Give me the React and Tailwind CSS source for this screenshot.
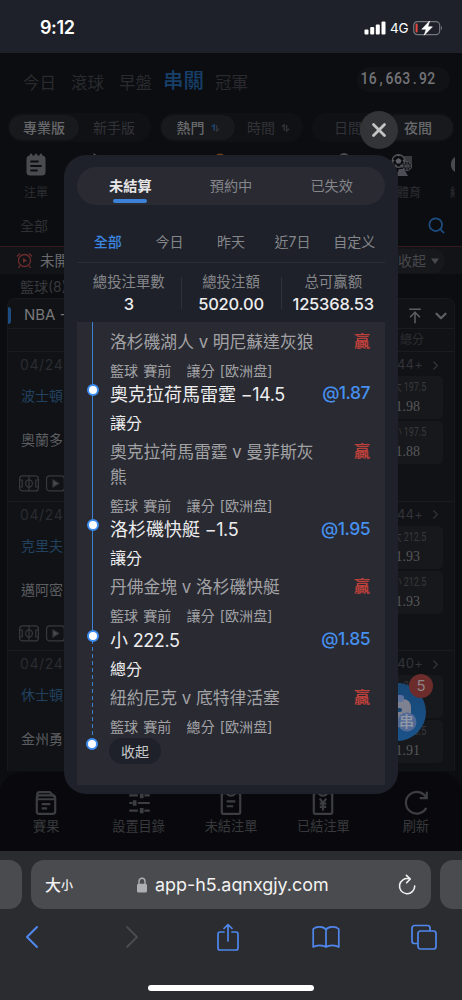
import React from "react";
import clsx from "clsx";
import { X, Search, ChevronRight, ChevronDown, ArrowUpToLine } from "lucide-react";

const sportTabs = ["今日", "滾球", "早盤", "串關", "冠軍"];

const matches = [
  { date: "04/24", home: "波士頓", away: "奧蘭多", more: "44+", line: "197.5", over: "1.98", under: "1.88" },
  { date: "04/24", home: "克里夫", away: "邁阿密", more: "44+", line: "212.5", over: "1.93", under: "1.93" },
  { date: "04/24", home: "休士頓", away: "金州勇", more: "40+", line: "205.5", over: "1.95", under: "1.91" },
];

const dateTabs = ["全部", "今日", "昨天", "近7日", "自定义"];

const stats = [
  { label: "總投注單數", value: "3" },
  { label: "總投注額", value: "5020.00" },
  { label: "总可赢额", value: "125368.53" },
];

const bets = [
  { pick: "奧克拉荷馬雷霆 −14.5", odds: "@1.87", type: "讓分", teams: "奧克拉荷馬雷霆 v 曼菲斯灰熊" },
  { pick: "洛杉磯快艇 −1.5", odds: "@1.95", type: "讓分", teams: "丹佛金塊 v 洛杉磯快艇" },
  { pick: "小 222.5", odds: "@1.85", type: "總分", teams: "紐約尼克 v 底特律活塞" },
];

const StatusBar = () => (
  <div className="flex h-[53px] shrink-0 items-start justify-between bg-[#1e2129] pl-[40px] pr-[20px] pt-[16px] text-white">
    <span className="text-[18px] font-semibold leading-6 tracking-[-0.4px]">9:12</span>
    <div className="flex h-6 items-center">
      <svg width="22" height="14" viewBox="0 0 22 14" fill="#fff">
        <rect x="0.5" y="8.5" width="4" height="5" rx="1" />
        <rect x="6.2" y="6" width="4" height="7.5" rx="1" />
        <rect x="11.8" y="3.5" width="4" height="10" rx="1" />
        <rect x="17.5" y="0.5" width="4" height="13" rx="1" />
      </svg>
      <span className="ml-[4px] mr-[5px] w-[18px] text-[13.5px] leading-6 tracking-[-0.3px]">4G</span>
      <svg width="29" height="16" viewBox="0 0 29 16" fill="none">
        <rect x="0.7" y="1.6" width="26" height="13" rx="3.8" stroke="#74767b" strokeWidth="1.2" />
        <path d="M28 6v4c1.3-.6 1.3-3.4 0-4z" fill="#74767b" />
        <rect x="2.6" y="3.6" width="2" height="9" rx="1" fill="#e6493f" />
        <path d="M16.6 1 8.8 9.2h4.4L11.2 15.2 19.4 6.800h-4.600z" fill="#fff" stroke="#fff" strokeWidth="0.6" strokeLinejoin="round" />
      </svg>
    </div>
  </div>
);

const SortArrows = ({ active }) => (
  <svg width="9" height="8" viewBox="0 0 9 8" fill="none" strokeWidth="1.4">
    <path d="M.8 2.8 3.2.8v6" stroke={active ? "#1c4876" : "#333438"} />
    <path d="M5.6 1v6L8.2 4.8" stroke="#333438" />
  </svg>
);

const Pill = ({ active, children, className }) => (
  <div
    className={clsx(
      "flex h-[25px] items-center justify-center gap-[6px] rounded-full text-[14px]",
      active ? "bg-[#18191c] font-medium text-[#68696c]" : "text-[#323337]",
      className
    )}
  >
    {children}
  </div>
);

const TopNav = () => (
  <>
    <div className="flex h-[58px] items-center pl-[23px] pr-[12px]">
      <div className="flex items-center gap-[13px] pt-[2px]">
        {sportTabs.map((tab) => (
          <span
            key={tab}
            className={
              tab === "串關"
                ? "ml-[-4px] mr-[-2px] -mt-[5px] w-[41px] text-[20.5px] font-medium leading-7 text-[#173f68]"
                : "w-[35px] text-[16.5px] leading-7 text-[#292a2d]"
            }
          >
            {tab}
          </span>
        ))}
      </div>
      <div className="-mt-[5px] ml-auto flex h-[25px] w-[93px] items-center rounded-full bg-[#111216]">
        <div className="-mt-[1px] flex origin-left scale-x-[0.82] pl-[4px] font-['Roboto',sans-serif] text-[17px] font-medium text-[#737476]">
          {"16,663.92".split("").map((c, i) => (
            <span key={i} className="w-[10.2px] text-center">
              {c}
            </span>
          ))}
        </div>
      </div>
    </div>

    <div className="flex h-[33px] items-start justify-between px-[8px] pt-[2px]">
      <div className="flex h-[29px] w-[143px] items-center rounded-full bg-[#101115] px-[1px]">
        <Pill active className="w-[70px]">專業版</Pill>
        <Pill className="w-[70px]">新手版</Pill>
      </div>
      <div className="flex h-[29px] w-[143px] items-center rounded-full bg-[#101115] px-[1px]">
        <Pill active className="w-[74px]">
          熱門 <SortArrows active />
        </Pill>
        <Pill className="w-[67px]">
          時間 <SortArrows />
        </Pill>
      </div>
      <div className="flex h-[29px] w-[142px] items-center rounded-full bg-[#101115] px-[1px]">
        <Pill className="w-[70px]">日間</Pill>
        <Pill active className="w-[70px]">夜間</Pill>
      </div>
    </div>
  </>
);

const SportIcons = () => (
  <div className="flex h-[64px] items-start gap-[10px] overflow-hidden pl-[10px] pt-[9px]">
    <div className="flex w-[52px] shrink-0 flex-col items-center">
      <svg width="20" height="24" viewBox="0 0 20 24">
        <rect x="0.5" y="2.5" width="19" height="20" rx="3.5" fill="#4a4b50" />
        <path d="M5 0.8v4M10 0.8v4M15 0.8v4" stroke="#4a4b50" strokeWidth="2.4" />
        <path d="M5 8.5h7M5 13h10M5 17.5h6" stroke="#0c0d11" strokeWidth="1.8" strokeLinecap="round" />
      </svg>
      <span className="mt-[6px] text-[12px] leading-5 text-[#2c2d31]">注單</span>
    </div>
    <div className="w-[52px] shrink-0">
      <svg width="30" height="12" viewBox="0 0 30 12">
        <path d="M21 0l7 4-5 1z" fill="#55565a" />
      </svg>
    </div>
    <div className="w-[52px] shrink-0" />
    <div className="flex w-[52px] shrink-0 justify-center">
      <svg width="14" height="14" viewBox="0 0 14 14">
        <circle cx="5" cy="7" r="6.5" fill="#6e3f1a" />
      </svg>
    </div>
    <div className="w-[52px] shrink-0" />
    <div className="flex w-[52px] shrink-0 justify-center">
      <svg width="12" height="12" viewBox="0 0 12 12">
        <circle cx="4" cy="6" r="6" fill="#4a4b50" />
      </svg>
    </div>
    <div className="flex w-[60px] shrink-0 flex-col pl-[9px]">
      <svg width="22" height="24" viewBox="0 0 22 24">
        <path d="M13 3h8v12h-8z" fill="#393a40" />
        <circle cx="7.5" cy="8" r="6.3" fill="#0c0d11" stroke="#515258" strokeWidth="1.4" />
        <path
          d="M7.5 5l3 2.2-1.2 3.4H5.7L4.5 7.2zM6 1.8h3.2L7.5 3.6zM1.4 6l2 1.4-1.6 2zM13.6 6l-2 1.4 1.6 2zM4 13.2l.5-2.2 2 2.4zM11 13.2l-.5-2.2-2 2.4z"
          fill="#5d5e65"
        />
        <circle cx="16" cy="13" r="4.6" fill="#15161b" stroke="#4d4e55" />
        <path d="M11.500 13h9M16 8.500v9M13 10c2 2 2 4 0 6M19 10c-2 2-2 4 0 6" stroke="#4d4e55" fill="none" />
        <path d="M8 16h5l4 7H5z" fill="#4d4e55" />
      </svg>
      <span className="ml-[6px] mt-[6px] text-[12px] leading-5 text-[#2c2d31]">體育</span>
    </div>
    <div className="-ml-[2px] flex w-[5px] shrink-0 flex-col overflow-hidden">
      <svg width="5" height="24" viewBox="0 0 5 24">
        <path d="M5 4C-.5 7-.5 16 5 19z" fill="#4a4b50" />
      </svg>
      <span className="mt-[6px] text-[12px] leading-5 text-[#2c2d31]">經</span>
    </div>
  </div>
);

const OddsBox = ({ side, line, odds }) => (
  <div className="flex h-[43px] w-[60px] flex-col items-end rounded-[5px] bg-[#17181b] pr-[17px] pt-[2px]">
    <span className="origin-right scale-x-[0.74] whitespace-nowrap font-['Roboto','Noto_Sans_CJK_TC',sans-serif] text-[12px] leading-[18px] text-[#37383c]">
      {side} {line}
    </span>
    <span className="mr-[6px] pt-[1px] font-['Liberation_Serif',serif] text-[14px] leading-[20px] text-[#56575a]">{odds}</span>
  </div>
);

const MatchRow = ({ match }) => (
  <div className="flex h-[149.5px] shrink-0 justify-between border-t border-[#1a1b1f] pl-[12px] pr-[11px]">
    <div className="flex flex-col">
      <span className="mt-[3px] text-[14px] leading-[20px] tracking-[0.6px] text-[#2b2c30]">{match.date}</span>
      <span className="mt-[11px] pl-[1px] text-[14px] leading-[20px] text-[#22415f]">{match.home}</span>
      <span className="mt-[24px] pl-[1px] text-[14px] leading-[20px] text-[#5c5d60]">{match.away}</span>
      <div className="mt-[24px] flex gap-[7px] pt-px -ml-px">
        <svg width="20" height="17" viewBox="0 0 20 17" fill="none" stroke="#37383c" strokeWidth="1.2">
          <rect x="0.6" y="0.9" width="18.8" height="15" rx="3" />
          <path d="M10 1v15M.6 5h2.6v7H.6M19.4 5h-2.6v7h2.6" />
          <ellipse cx="10" cy="8.5" rx="3.4" ry="3.6" />
        </svg>
        <svg width="19" height="17" viewBox="0 0 19 17" fill="none" stroke="#37383c" strokeWidth="1.2">
          <rect x="0.6" y="0.9" width="17.8" height="15" rx="3" />
          <path d="M7 5l5.6 3.5L7 12z" fill="#4a4b4e" />
        </svg>
      </div>
    </div>
    <div className="flex flex-col items-end">
      <div className="mt-[3px] flex h-[20px] items-center gap-[5px] text-[#333438]">
        <span className="text-[13px] tracking-[0.2px]">{match.more}</span>
        <ChevronRight className="h-[15px] w-[15px]" strokeWidth={1.8} />
      </div>
      <div className="mt-[1px] flex flex-col gap-[2px]">
        <OddsBox side="大" line={match.line} odds={match.over} />
        <OddsBox side="小" line={match.line} odds={match.under} />
      </div>
    </div>
  </div>
);

const LeagueCard = () => (
  <div className="mx-[7px] flex h-[473px] flex-col overflow-hidden rounded-t-[8px] border border-b-0 border-[#17181c] bg-[#101216]">
    <div className="flex h-[29px] shrink-0 items-center">
      <span className="mt-[3px] h-[17px] w-[3px] rounded-r-[4px] bg-[#1d4d80]" />
      <span className="ml-[13px] mt-[3px] text-[15px] text-[#77787a]">NBA -</span>
      <div className="ml-auto mr-[4px] mt-[5px] flex items-center gap-[8px] text-[#5e5f62]">
        <ArrowUpToLine className="h-[18px] w-[18px]" strokeWidth={2} />
        <ChevronDown className="h-[18px] w-[18px]" strokeWidth={3} />
      </div>
    </div>
    <div className="flex h-[23px] shrink-0 items-center justify-end border-t border-[#1a1b1f] pr-[30px] text-[12px] text-[#2d2e32]">總分</div>
    {matches.map((match, i) => (
      <MatchRow key={i} match={match} />
    ))}
  </div>
);

const navItems = [
  {
    label: "賽果",
    icon: (
      <>
        <rect x="3.500" y="5" width="17" height="17" rx="2.500" />
        <path d="M4 7V4a2 2 0 0 1 2-2h9.500l4.500 4.500M3.500 8.500H20M8 13h8M8 17h5" />
      </>
    ),
  },
  {
    label: "設置目錄",
    icon: (
      <>
        <path d="M3 5h8M17 5h5M3 12h3M11 12h11M3 19h8M17 19h5" />
        <path d="M14.500 2.500v5M8 9.500v5M14.500 16.500v5" strokeWidth="3.400" />
      </>
    ),
  },
  {
    label: "未結注單",
    icon: (
      <>
        <path d="M8 3H5a1.500 1.500 0 0 0-1.500 1.500v16A1.500 1.500 0 0 0 5 22h14a1.500 1.500 0 0 0 1.500-1.500v-16A1.500 1.500 0 0 0 19 3h-3" />
        <path d="M8 1.500c0 5 8 5 8 0M8 10.500h8M8 15h6" />
      </>
    ),
  },
  {
    label: "已結注單",
    icon: (
      <>
        <path d="M8 3H5a1.500 1.500 0 0 0-1.500 1.500v16A1.500 1.500 0 0 0 5 22h14a1.500 1.500 0 0 0 1.500-1.500v-16A1.500 1.500 0 0 0 19 3h-3" />
        <path d="M8 1.500c0 5 8 5 8 0M9 8l3 4 3-4M12 12v7M9 12.500h6M9 15.500h6" />
      </>
    ),
  },
  {
    label: "刷新",
    icon: (
      <>
        <path d="M21.500 7A10 10 0 1 0 21.500 16.500" />
        <path d="M22 1.500v6h-6.500" />
      </>
    ),
  },
];

const BottomNav = () => (
  <div className="flex h-[79px] shrink-0 rounded-t-[22px] bg-[#09090d]">
    {navItems.map((item) => (
      <div key={item.label} className="flex flex-1 flex-col items-center pt-[18px]">
        <svg width="26" height="26" viewBox="0 0 24 24" fill="none" stroke="#3d3e41" strokeWidth="2" className="overflow-visible">
          {item.icon}
        </svg>
        <span className="text-[13.200px] leading-5 text-[#38393c]">{item.label}</span>
      </div>
    ))}
  </div>
);

const FloatingSlip = () => (
  <div className="absolute left-[368px] top-[683px] h-[58px] w-[58px] rounded-full bg-gradient-to-b from-[#174775] to-[#1a5389]">
    <svg width="58" height="58" viewBox="0 0 58 58">
      <rect x="10" y="16" width="33" height="28" rx="8" fill="#7e8290" />
      <rect x="25" y="12" width="11" height="7" rx="3" fill="#5d719c" />
      <path d="M16 25h16a2 2 0 0 1 0 4H16z" fill="#174775" />
      <circle cx="39" cy="39" r="9.500" fill="#526a96" />
    </svg>
    <span className="absolute left-[31px] top-[29px] text-[15px] font-medium leading-5 text-[#9298a5]">串</span>
    <span className="absolute left-[41px] top-[-9px] flex h-[24px] w-[24px] items-center justify-center rounded-full bg-[#6b2c2b] text-[15px] text-[#8f8484]">
      5
    </span>
  </div>
);

const Dot = ({ className }) => (
  <span className={clsx("absolute h-[12px] w-[12px] rounded-full border-2 border-[#3e8df0] bg-white", className)} />
);

const BetTeams = ({ teams, info }) => (
  <>
    <div className="flex items-start justify-between">
      <span className="w-[210px] text-[16.8px] leading-[25px] text-[#a2a2a5]">{teams}</span>
      <span className="-mt-[1px] text-[16px] font-bold leading-[25px] text-[#ba403b]">贏</span>
    </div>
    <div className="h-[27.5px] whitespace-pre pt-[5px] text-[14px] leading-[21px] tracking-[0.1px] text-[#a2a2a5] [word-spacing:1px]">
      {info}
    </div>
  </>
);

const BetTimeline = () => (
  <div className="mx-[13px] h-[463px] overflow-hidden bg-[#292a32]">
    <div className="relative h-[59.5px] pl-[33px] pr-[15px] pt-[8px]">
      <span className="absolute bottom-0 left-[15px] top-0 w-[1.3px] bg-[#3c80cf]" />
      <BetTeams teams="洛杉磯湖人 v 明尼蘇達灰狼" info="籃球 賽前   讓分 [欧洲盘]" />
    </div>
    {bets.map((bet, i) => {
      const last = i === bets.length - 1;
      return (
        <div key={bet.pick} className="relative pl-[33px] pr-[15px]">
          {/* the last leg runs dashed down to the closing dot */}
          {last ? (
            <>
              <span className="absolute left-[15px] top-0 h-[8px] w-[1.3px] bg-[#3c80cf]" />
              <span className="absolute left-[15px] top-[12px] h-[98px] w-[1.3px] bg-[repeating-linear-gradient(to_bottom,#3c80cf_0_4px,transparent_4px_7px)]" />
            </>
          ) : (
            <span className="absolute bottom-0 left-[15px] top-0 w-[1.3px] bg-[#3c80cf]" />
          )}
          <Dot className="left-[10px] top-[2px]" />
          <div className="flex h-[24px] items-center justify-between">
            <span className="pt-px text-[18px] text-[#ededee]">
              {bet.pick.split(" ")[0]}
              <span className="tracking-[-0.4px]"> {bet.pick.split(" ")[1]}</span>
            </span>
            <span className="text-[17.5px] font-medium tracking-[-0.5px] text-[#4690ee]">{bet.odds}</span>
          </div>
          <div className="flex h-[34px] items-center text-[16px] text-[#ededee]">{bet.type}</div>
          <BetTeams teams={bet.teams} info={`籃球 賽前   ${bet.type} [欧洲盘]`} />
        </div>
      );
    })}
    <div className="relative pl-[32px]">
      <Dot className="left-[9px] top-0" />
      <button className="flex h-[26px] w-[52px] items-center justify-center rounded-full bg-[#1e2129] text-[14px] text-[#c8c8ca]">收起</button>
    </div>
  </div>
);

const BetModal = () => (
  <div className="absolute left-[64px] top-[155px] h-[639px] w-[334px] overflow-hidden rounded-[22px] bg-[#1e2129]">
    <div className="mx-[13px] mt-[12px] flex h-[38px] rounded-full bg-[#2a2a32] px-[3px] text-[14.2px]">
      {["未結算", "預約中", "已失效"].map((tab, i) => (
        <div key={tab} className={clsx("relative flex flex-1 items-center justify-center", i === 0 ? "font-bold text-[#e6e6e7]" : "text-[#85868a]")}>
          {tab}
          {i === 0 && <span className="absolute bottom-[2px] h-[4px] w-[34px] rounded-[2px] bg-[#3b82d8]" />}
        </div>
      ))}
    </div>

    <div className="mx-[13px] mt-[16px] flex h-[42px] items-center border-b border-[#2a2d35] text-[14px]">
      {dateTabs.map((tab) => (
        <span key={tab} className={clsx("flex-1 text-center", tab === "全部" ? "font-medium text-[#3b86e0]" : "text-[#85868a]")}>
          {tab}
        </span>
      ))}
    </div>

    <div className="mx-[13px] flex h-[59px] items-center">
      {stats.map((stat, i) => (
        <div
          key={stat.label}
          className={clsx(
            "flex h-[32px] flex-col items-center justify-center",
            i === 1 ? "w-[101px] border-x border-[#30323a]" : "w-[103.5px]"
          )}
        >
          <span className="whitespace-nowrap text-[14.4px] leading-[22px] text-[#85868a]">{stat.label}</span>
          <span className="text-[16.5px] font-medium leading-[22px] tracking-[-0.2px] text-[#ededee]">{stat.value}</span>
        </div>
      ))}
    </div>

    <BetTimeline />
  </div>
);

const SafariBar = () => (
  <div className="flex h-[149px] shrink-0 flex-col bg-[#2b2c30]">
    <div className="mt-[9px] flex h-[49px] justify-between">
      <span className="w-[22px] rounded-r-[13px] bg-[#4a4b4e]" />
      <div className="flex w-[400px] items-center rounded-[13px] bg-[#4a4b4e] pl-[14px] pr-[15px] text-[#f2f2f2]">
        <span className="text-[16px] font-medium">大</span>
        <span className="mt-[3px] text-[12px] font-medium">小</span>
        <svg className="ml-[63px]" width="12" height="16" viewBox="0 0 12 16" fill="none">
          <rect x="1" y="6.8" width="10" height="8.7" rx="1.5" fill="#aeaeb5" />
          <path d="M3 7V4.2a3 3 0 0 1 6 0V7" stroke="#aeaeb5" strokeWidth="1.4" />
        </svg>
        <span className="ml-[7px] pb-px pt-[2px] text-[17.900px]">app-h5.aqnxgjy.com</span>
        <svg className="ml-auto" width="18" height="22" viewBox="0 0 18 22" fill="none" stroke="#f2f2f2" strokeWidth="1.6" strokeLinecap="round" strokeLinejoin="round">
          <path d="M11 4.800A7.600 7.600 0 1 0 16.700 12" />
          <path d="M8.400 1.300 12.300 5 8.600 8.700" />
        </svg>
      </div>
      <span className="w-[22px] rounded-l-[13px] bg-[#4a4b4e]" />
    </div>

    <div className="flex h-[56px] items-center justify-between pl-[18px] pr-[24px]">
      <svg width="28" height="24" viewBox="0 0 28 24" fill="none" stroke="#4f87ed" strokeWidth="2" strokeLinecap="round" strokeLinejoin="round">
        <path d="M19 2 9 12l10 10" />
      </svg>
      <svg width="28" height="24" viewBox="0 0 28 24" fill="none" stroke="#4b4c50" strokeWidth="1.8" strokeLinecap="round" strokeLinejoin="round">
        <path d="M11 2l10 10-10 10" />
      </svg>
      <svg width="28" height="30" viewBox="-2 0 28 30" fill="none" stroke="#4f87ed" strokeWidth="1.7" strokeLinecap="round" strokeLinejoin="round">
        <path d="M8 10H4a2 2 0 0 0-2 2v14a2 2 0 0 0 2 2h16a2 2 0 0 0 2-2V12a2 2 0 0 0-2-2h-4M12 19V2.500M8 6.500l4-4 4 4" />
      </svg>
      <svg width="28" height="24" viewBox="0 0 28 24" fill="none" stroke="#4f87ed" strokeWidth="1.7" strokeLinejoin="round">
        <path d="M14 4.500C11.500 1.200 4.500.8 1.200 4v18c3.300-2.300 9.800-2.300 12.800 0 3-2.300 9.500-2.300 12.800 0V4C23.500.8 16.500 1.200 14 4.500zM14 4.500V22" />
      </svg>
      <svg width="28" height="27" viewBox="0 0 28 27" fill="none" stroke="#4f87ed" strokeWidth="1.7">
        <path d="M7.500 19.500H4.500a2.500 2.500 0 0 1-2.500-2.500V4a2.500 2.500 0 0 1 2.500-2.500h13A2.500 2.500 0 0 1 20 4v3" />
        <rect x="8" y="7" width="18" height="18" rx="2.500" />
      </svg>
    </div>

    <span className="mt-[20px] h-[6px] w-[166px] self-center rounded-full bg-white" />
  </div>
);

const App = () => {
  return (
    <div className="relative flex h-[1000px] w-[462px] flex-col overflow-hidden bg-[#0c0d11] font-['Inter','Noto_Sans_CJK_TC',sans-serif]">
      <StatusBar />

      <div className="flex h-[798px] shrink-0 flex-col overflow-hidden">
        <TopNav />
        <SportIcons />
        <div className="flex h-[38px] items-center justify-between pb-[3px] pl-[20px] pr-[16px]">
          <span className="text-[14px] text-[#2e2f33]">全部</span>
          <Search className="h-[19px] w-[19px] text-[#1d4d80]" strokeWidth={2.2} />
        </div>

        {/* upcoming matches header */}
        <div className="flex h-[28px] shrink-0 items-center justify-between border-t border-[#35191b] bg-[#121317] pl-[16px]">
          <div className="flex items-center gap-[7px]">
            <svg width="17" height="17" viewBox="0 0 17 17" fill="none" stroke="#6c2d2d" strokeWidth="1.3">
              <circle cx="8.5" cy="8.5" r="6" />
              <path d="M1 4.500 4 1.500M16 4.500l-3-3M4 13.500l-1.500 2.500M13 13.500l1.500 2.500" />
              <path d="M7 6l4 2.500L7 11z" fill="#6c2d2d" stroke="none" />
            </svg>
            <span className="text-[14.5px] text-[#6a6b6e]">未開賽</span>
          </div>
          <div className="mr-[17px] flex h-[24px] w-[60px] items-center justify-end gap-[5px] rounded-full bg-[#17181c] pr-[6px] text-[14px] text-[#48494c]">
            收起
            <svg width="8" height="6" viewBox="0 0 8 6">
              <path d="M0 .5h8L4 6z" fill="#48494c" />
            </svg>
          </div>
        </div>
        <div className="flex h-[24px] shrink-0 items-center pl-[20px] text-[14px] text-[#38393c]">籃球(8)</div>

        <LeagueCard />
        <div className="h-[1px] shrink-0" />
        <BottomNav />
      </div>

      <SafariBar />

      <FloatingSlip />
      <BetModal />
      <button className="absolute left-[360px] top-[111px] flex h-[38px] w-[38px] items-center justify-center rounded-full bg-[#333437] text-[#c4c4c5]">
        <X className="h-[22px] w-[22px]" strokeWidth={3} />
      </button>
    </div>
  );
};

export default App;
